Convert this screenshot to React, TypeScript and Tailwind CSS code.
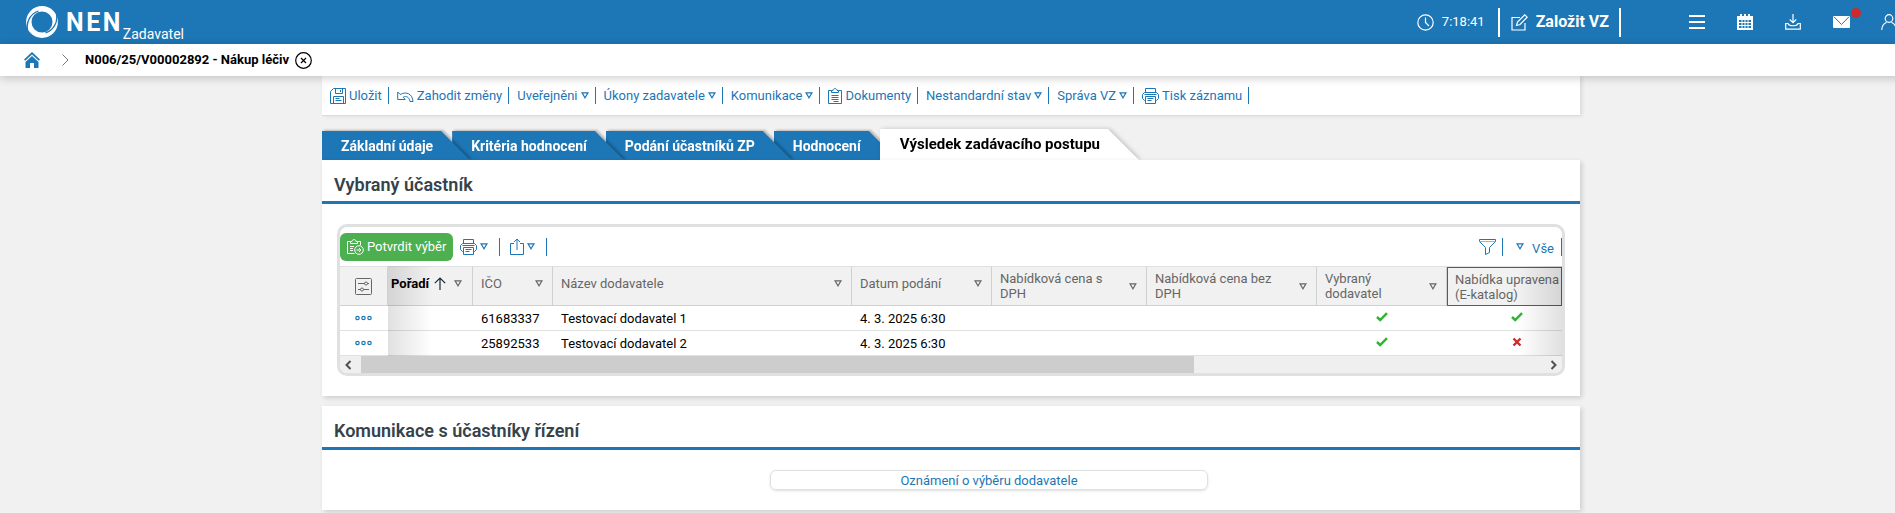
import React from 'react';

type IconProps = { className?: string };

const SaveIcon: React.FC<IconProps> = ({ className = 'size-4' }) => (
  <svg viewBox="0 0 16 16" className={className} fill="none" stroke="currentColor">
    <path d="M3.5.5h12v15H.5v-12z" />
    <path d="M5.5.5v5h7v-5M10.5 2v2M3.5 15.5v-7h10v7M5.5 10.5h4M5.5 12.5h6" />
  </svg>
);

const UndoIcon: React.FC<IconProps> = ({ className = 'h-4 w-[17px]' }) => (
  <svg viewBox="0 0 17 16" className={className} fill="none" stroke="currentColor" strokeLinejoin="round">
    <path d="M.7 4v7.500h7.500L6.200 9.200c3-1.500 5.800-.5 6.800 4.300h3C15.500 6 9.500 3 3.200 6.500z" />
  </svg>
);

const ClipboardIcon: React.FC<IconProps> = ({ className = 'h-4 w-[14px]' }) => (
  <svg viewBox="0 0 14 16" className={className} fill="none" stroke="currentColor">
    <path d="M3.500 2.500h-3v13h13v-13h-3" />
    <path d="M3.500 4.500v-2h1.500c0-2.500 4-2.500 4 0h1.500v2zM3.500 7.500h7M3.500 9.500h7M3.500 11.500h7M5.500 13.500h5" />
  </svg>
);

const ConfirmIcon: React.FC<IconProps> = ({ className = 'h-4 w-[17px]' }) => (
  <svg viewBox="0 0 17 16" className={className} fill="none" stroke="currentColor">
    <path d="M3.500 2.500h-3v12h7M10.500 2.500h3v3.500" />
    <path d="M3.500 4.500v-2H5c0-2.500 4-2.500 4 0h1.500v2zM3 7.500h4M3 9.500h3M3 11.500h3" />
    <circle cx="12" cy="11" r="4.300" />
    <path d="M9.500 11h4.500M12 9l2 2-2 2" />
  </svg>
);

const PrinterIcon: React.FC<IconProps> = ({ className = 'h-4 w-[17px]' }) => (
  <svg viewBox="0 0 17 16" className={className} fill="none" stroke="currentColor">
    <path d="M3.500 4.500v-4h10v4M3.500 12.500h-1l-2-2v-4l2-2h12l2 2v4l-2 2h-1" />
    <path d="M3.500 8.500h10v7h-10zM2.500 6.500h12M5.500 10.500h6M5.500 12.500h4" />
  </svg>
);

const ShareIcon: React.FC<IconProps> = ({ className = 'h-[17px] w-[14px]' }) => (
  <svg viewBox="0 0 14 17" className={className} fill="none" stroke="currentColor">
    <path d="M4 5.500H.5v11h13v-11H10M7 12V1M4 4l3-3 3 3" />
  </svg>
);

const FunnelIcon: React.FC<IconProps> = ({ className = 'h-4 w-[17px]' }) => (
  <svg viewBox="0 0 17 16" className={className} fill="none" stroke="currentColor">
    <path d="M.5.500h16v2l-6 6v5l-4 2v-7l-6-6z" />
    <path d="M1 2.500h15" strokeOpacity="0.5" />
  </svg>
);

const SlidersIcon: React.FC<IconProps> = ({ className = 'size-[17px]' }) => (
  <svg viewBox="0 0 17 17" className={className} fill="none" stroke="currentColor">
    <rect x="0.500" y="0.500" width="16" height="16" rx="1" />
    <path d="M3 5.500h6.500M12.500 5.500H14M3 11.500h2.500M8.500 11.500H14" />
    <circle cx="11" cy="5.500" r="1.500" />
    <circle cx="7" cy="11.500" r="1.500" />
  </svg>
);

const DotsIcon: React.FC<IconProps> = ({ className = 'h-[6px] w-[17px]' }) => (
  <svg viewBox="0 0 17 6" className={className} fill="none" stroke="currentColor" strokeWidth="1.200">
    <circle cx="2.500" cy="3" r="1.700" />
    <circle cx="8.500" cy="3" r="1.700" />
    <circle cx="14.500" cy="3" r="1.700" />
  </svg>
);

const Caret: React.FC<IconProps> = ({ className = 'h-[7px] w-2' }) => (
  <svg viewBox="0 0 8 7" className={className} fill="none" stroke="currentColor" strokeWidth="1.200">
    <path d="M1 .800h6L4 5.800z" />
  </svg>
);

const CheckIcon: React.FC = () => (
  <svg viewBox="0 0 12 10" className="inline-block h-[10px] w-3" fill="none" stroke="#2fb42f" strokeWidth="2.400" role="img" aria-label="Ano">
    <path d="M1 5l3.200 3L11 1.200" />
  </svg>
);

const CrossIcon: React.FC = () => (
  <svg viewBox="0 0 10 10" className="inline-block size-[10px]" fill="none" stroke="#cb2b2b" strokeWidth="2.400" role="img" aria-label="Ne">
    <path d="M1.500 1.500l7 7M8.500 1.500l-7 7" />
  </svg>
);

const toolbar = [
  { label: 'Uložit', icon: <SaveIcon /> },
  { label: 'Zahodit změny', icon: <UndoIcon /> },
  { label: 'Uveřejněni', menu: true },
  { label: 'Úkony zadavatele', menu: true },
  { label: 'Komunikace', menu: true },
  { label: 'Dokumenty', icon: <ClipboardIcon /> },
  { label: 'Nestandardní stav', menu: true },
  { label: 'Správa VZ', menu: true },
  { label: 'Tisk záznamu', icon: <PrinterIcon /> },
];

const tabs = [
  { label: 'Základní údaje', z: 'z-[4]' },
  { label: 'Kritéria hodnocení', z: 'z-[3]' },
  { label: 'Podání účastníků ZP', z: 'z-[2]' },
  { label: 'Hodnocení', z: 'z-[1]' },
];

const rows = [
  { ico: '61683337', name: 'Testovací dodavatel 1', date: '4. 3. 2025 6:30', edited: true },
  { ico: '25892533', name: 'Testovací dodavatel 2', date: '4. 3. 2025 6:30', edited: false },
];

const TopBar: React.FC = () => (
  <header className="flex h-11 items-center justify-between bg-[#1d76b5] text-white">
    <a href="#" className="flex h-full items-center pl-[26px]">
      <svg viewBox="0 0 32 32" className="size-8" fill="none">
        <circle cx="16" cy="16" r="13.200" stroke="currentColor" strokeWidth="5.400" />
        <path d="M30.500 8.500c1.500 8-3 15.500-11 18.500" stroke="#1d76b5" strokeWidth="1.300" />
        <path d="M1.500 23.500C0 15.500 4.500 8 12.500 5" stroke="#1d76b5" strokeWidth="1.300" />
      </svg>
      <span className="pt-px pl-2 text-[25px] leading-8 font-bold tracking-widest">NEN</span>
      <span className="self-end pb-[2px] text-sm leading-4">Zadavatel</span>
    </a>
    <div className="-mr-[11px] flex items-center">
      <div className="flex items-center gap-2 pr-[13px] text-[13px]">
        <svg viewBox="0 0 17 17" className="size-[17px]" fill="none" stroke="currentColor" strokeWidth="1.200">
          <circle cx="8.500" cy="8.500" r="7.700" />
          <path d="M8.500 3.500v5l3.500 3.500" />
        </svg>
        <span>7:18:41</span>
      </div>
      <button className="flex h-[29px] items-center gap-2 border-x-2 border-white pr-[10px] pl-[11px] text-base font-bold">
        <svg viewBox="0 0 17 17" className="size-[17px]" fill="none" stroke="currentColor" strokeWidth="1.200">
          <path d="M9 3.500H1v12.500h13V9" />
          <path d="M5.500 11.500l1-3.500L13.800.8l2.400 2.400L9 10.500z" />
        </svg>
        Založit VZ
      </button>
      <nav className="flex pl-[52px]">
        <button aria-label="Menu" className="flex h-11 w-12 items-center justify-center">
          <svg viewBox="0 0 16 14" className="h-[14px] w-4" stroke="currentColor" strokeWidth="2">
            <path d="M0 1h16M0 7h16M0 13h16" />
          </svg>
        </button>
        <button aria-label="Kalendář" className="flex h-11 w-12 items-center justify-center">
          <svg viewBox="0 0 16 16" className="size-4">
            <path d="M0 2h16v14H0z" fill="currentColor" />
            <path d="M3 0h2v3H3zM11 0h2v3h-2zM7 0h2v3H7z" fill="currentColor" />
            <path d="M2 6h12v8H2z" fill="#1d76b5" />
            <path d="M2 8.500h12M2 11.500h12M5 6v8M8 6v8M11 6v8" stroke="currentColor" />
          </svg>
        </button>
        <button aria-label="Stažené" className="flex h-11 w-12 items-center justify-center">
          <svg viewBox="0 0 16 16" className="size-4" fill="none" stroke="currentColor" strokeWidth="1.200">
            <path d="M8 0v8.500M4.800 5.500L8 8.700l3.200-3.200" />
            <path d="M3 9.500H.700v5.700h14.600V9.500H13c-1 3-9 3-10 0z" />
          </svg>
        </button>
        <button aria-label="Zprávy" className="relative flex h-11 w-12 items-center justify-center">
          <svg viewBox="0 0 17 12" className="h-3 w-[17px]">
            <rect width="17" height="12" rx="1" fill="currentColor" />
            <path d="M1 .800l7.500 7.700L16 .800" fill="none" stroke="#1d76b5" />
          </svg>
          <span className="absolute top-2 right-1 size-[10px] rounded-full bg-[#cb2b2b]" />
        </button>
        <button aria-label="Uživatel" className="flex h-11 w-12 items-center justify-center">
          <svg viewBox="0 0 16 16" className="size-4" fill="none" stroke="currentColor" strokeWidth="1.200">
            <circle cx="8" cy="4.500" r="3.800" />
            <path d="M.800 16c0-4 2-6.500 4.800-7.800M15.200 16c0-4-2-6.500-4.800-7.800" />
          </svg>
        </button>
      </nav>
    </div>
  </header>
);

const Breadcrumb: React.FC = () => (
  <nav className="relative z-20 flex h-8 items-center bg-white pl-6 shadow-[0_2px_10px_rgba(0,0,0,0.2)]">
    <a href="#" aria-label="Domů" className="text-[#1d76b5]">
      <svg viewBox="0 0 16 16" className="size-4" fill="currentColor">
        <path d="M8 0l8 7.500-1.200 1.300L8 2.500 1.200 8.800 0 7.500z" />
        <path d="M8 4l6.500 6v6H10v-5H6v5H1.500v-6z" />
      </svg>
    </a>
    <svg viewBox="0 0 7 12" className="ml-[22px] h-3 w-[7px]" fill="none" stroke="#777">
      <path d="M.500.500L6 6 .500 11.500" />
    </svg>
    <span className="ml-4 text-[13px] font-bold text-black">N006/25/V00002892 - Nákup léčiv</span>
    <button aria-label="Zavřít" className="ml-[6px]">
      <svg viewBox="0 0 17 17" className="size-[17px]" fill="none" stroke="#000" strokeWidth="1.200">
        <circle cx="8.500" cy="8.500" r="7.800" />
        <path d="M6 6l5 5M11 6l-5 5" />
      </svg>
    </button>
  </nav>
);

const Tabs: React.FC = () => (
  <div role="tablist" className="flex h-[31px] items-end">
    {tabs.map((tab) => (
      <div key={tab.label} className={`relative ${tab.z} -mr-[18px] drop-shadow-[2px_-1px_1px_rgba(0,0,0,0.25)]`}>
        <button
          role="tab"
          className="block h-[29px] bg-[#1d76b5] pr-[37px] pl-[19px] text-sm font-bold text-white [clip-path:polygon(0_0,calc(100%-29px)_0,100%_100%,0_100%)]"
        >
          {tab.label}
        </button>
      </div>
    ))}
    <div className="relative z-[5] drop-shadow-[2px_0_2px_rgba(0,0,0,0.2)]">
      <button
        role="tab"
        aria-selected="true"
        className="block h-[31px] bg-white pr-[39px] pl-5 text-[15px] font-bold text-black [clip-path:polygon(0_0,calc(100%-31px)_0,100%_100%,0_100%)]"
      >
        Výsledek zadávacího postupu
      </button>
    </div>
  </div>
);

const HeadCell: React.FC<{ label: string; className?: string }> = ({ label, className = 'pr-[9px]' }) => (
  <th className="border-r border-b border-[#d0d0d0] bg-[#f1f1f1] p-0 text-left font-normal text-[#666]">
    <div className={`flex items-center justify-between pl-2 ${className}`}>
      <span>{label}</span>
      <Caret />
    </div>
  </th>
);

const SupplierTable: React.FC = () => (
  <div className="overflow-hidden rounded-[10px] border-[3px] border-[#dfe0e0]">
    <div className="flex h-[39px] items-center justify-between text-[13px] text-[#1d76b5]">
      <div className="flex items-center">
        <button className="flex h-7 items-center gap-[3px] rounded-md bg-[#4caf50] px-[7px] text-white">
          <ConfirmIcon />
          Potvrdit výběr
        </button>
        <button aria-label="Tisk" className="flex h-[18px] items-center gap-[3px] border-r border-current pr-[11px] pl-[7px]">
          <PrinterIcon />
          <Caret />
        </button>
        <button aria-label="Export" className="flex h-[18px] items-center gap-[3px] border-r border-current pr-[11px] pl-[10px]">
          <ShareIcon />
          <Caret />
        </button>
      </div>
      <div className="flex items-center">
        <button aria-label="Filtr" className="flex h-[18px] items-center border-r border-current pr-[6px]">
          <FunnelIcon />
        </button>
        <button className="flex h-[18px] items-center gap-2 border-r border-current pr-[7px] pl-[13px]">
          <Caret />
          <span className="pt-1">Vše</span>
        </button>
      </div>
    </div>
    <div className="relative">
      <table className="w-full table-fixed border-separate border-spacing-0 border-t border-[#dfe0e0] text-[13px] leading-[15px] text-black">
        <colgroup>
          <col className="w-12" />
          <col className="w-[85px]" />
          <col className="w-20" />
          <col />
          <col className="w-[140px]" />
          <col className="w-[155px]" />
          <col className="w-[170px]" />
          <col className="w-[130px]" />
          <col className="w-[115px]" />
        </colgroup>
        <thead>
          <tr className="h-[39px]">
            <th className="border-r border-b border-[#d0d0d0] bg-[#f1f1f1] p-0 text-[#666]">
              <button aria-label="Nastavení sloupců" className="block pl-[15px]">
                <SlidersIcon />
              </button>
            </th>
            <th className="border-r border-b border-[#d0d0d0] bg-[#f1f1f1] p-0 text-left font-bold">
              <div className="flex items-center pr-[10px] pb-[6px] pl-[3px]">
                <span>Pořadí</span>
                <svg viewBox="0 0 12 13" className="ml-[5px] h-[13px] w-3" fill="none" stroke="#1c2b3a" strokeWidth="1.200">
                  <path d="M6 13V1M.800 6.200L6 1l5.200 5.200" />
                </svg>
                <Caret className="ml-auto h-[7px] w-2 text-[#666]" />
              </div>
            </th>
            <HeadCell label="IČO" className="pr-[9px] pb-[6px]" />
            <HeadCell label="Název dodavatele" className="pr-[9px] pb-[6px]" />
            <HeadCell label="Datum podání" className="pr-[9px] pb-[6px]" />
            <HeadCell label="Nabídková cena s DPH" />
            <HeadCell label="Nabídková cena bez DPH" />
            <HeadCell label="Vybraný dodavatel" />
            <th className="border border-[#ec1c24] bg-[#f1f1f1] p-0 pl-[7px] text-left font-normal text-[#666]">
              Nabídka upravena (E-katalog)
            </th>
          </tr>
        </thead>
        <tbody>
          {rows.map((row) => (
            <tr key={row.ico} className="h-[25px] [&>td]:border-b [&>td]:border-[#dfe0e0]">
              <td className="p-0">
                <button aria-label="Akce" className="block pl-[15px] text-[#1d76b5]">
                  <DotsIcon />
                </button>
              </td>
              <td className="p-0" />
              <td className="p-0 pl-2">{row.ico}</td>
              <td className="p-0 pl-2">{row.name}</td>
              <td className="p-0 pl-2">{row.date}</td>
              <td className="p-0" />
              <td className="p-0" />
              <td className="p-0 pb-1 text-center"><CheckIcon /></td>
              <td className="p-0 pb-1 pl-6 text-center">{row.edited ? <CheckIcon /> : <CrossIcon />}</td>
            </tr>
          ))}
        </tbody>
      </table>
      <div className="pointer-events-none absolute inset-y-0 left-12 w-11 bg-linear-to-r from-black/12 to-transparent" />
      <div className="pointer-events-none absolute inset-y-0 right-0 w-11 bg-linear-to-l from-black/12 to-transparent" />
    </div>
    <div className="flex h-[17px] bg-[#efefef] text-[#505050]">
      <button aria-label="Posunout vlevo" className="flex w-[21px] items-center pl-1">
        <svg viewBox="0 0 8 10" className="h-[10px] w-2" fill="none" stroke="currentColor" strokeWidth="2">
          <path d="M6.500 1l-4 4 4 4" />
        </svg>
      </button>
      <div className="flex-1">
        <div className="h-full w-[70.6%] bg-[#cdcdcd]" />
      </div>
      <button aria-label="Posunout vpravo" className="flex w-[21px] items-center justify-end pr-1">
        <svg viewBox="0 0 8 10" className="h-[10px] w-2" fill="none" stroke="currentColor" strokeWidth="2">
          <path d="M1.500 1l4 4-4 4" />
        </svg>
      </button>
    </div>
  </div>
);

const App: React.FC = () => {
  return (
    <div className="min-h-screen overflow-hidden bg-[#f1f1f1] font-[Roboto,sans-serif]">
      <div className="-mr-[7px]">
        <TopBar />
        <Breadcrumb />
        <main className="mx-auto max-w-[1258px]">
          <div className="flex h-10 items-center border-b border-[#dcdcdc] bg-white shadow-[2px_0_4px_rgba(0,0,0,0.1)]">
            {toolbar.map((item) => (
              <button
                key={item.label}
                className="flex h-[17px] items-center gap-[3px] border-r border-[#1d76b5] pr-[6px] pl-2 text-[13px] text-[#1d76b5]"
              >
                {item.icon}
                {item.label}
                {item.menu && <Caret />}
              </button>
            ))}
          </div>
          <div className="pt-[13px]">
            <Tabs />
          </div>
          <section className="relative z-10 bg-white shadow-[2px_2px_5px_rgba(0,0,0,0.15)]">
            <h2 className="h-11 border-b-[3px] border-[#1d76b5] pt-[13px] pl-3 text-lg leading-6 font-semibold text-[#36424a]">
              Vybraný účastník
            </h2>
            <div className="px-[15px] pt-5 pb-5">
              <SupplierTable />
            </div>
          </section>
          <section className="relative z-10 mt-[10px] bg-white shadow-[2px_2px_5px_rgba(0,0,0,0.15)]">
            <h2 className="h-11 border-b-[3px] border-[#1d76b5] pt-[13px] pl-3 text-lg leading-6 font-semibold text-[#36424a]">
              Komunikace s účastníky řízení
            </h2>
            <div className="flex justify-center pt-5 pb-5 pl-[76px]">
              <button className="h-5 w-[438px] rounded-md border border-[#dfe0e0] pt-px text-[13px] leading-4 text-[#1d76b5] shadow-sm">
                Oznámení o výběru dodavatele
              </button>
            </div>
          </section>
        </main>
      </div>
    </div>
  );
};

export default App;
